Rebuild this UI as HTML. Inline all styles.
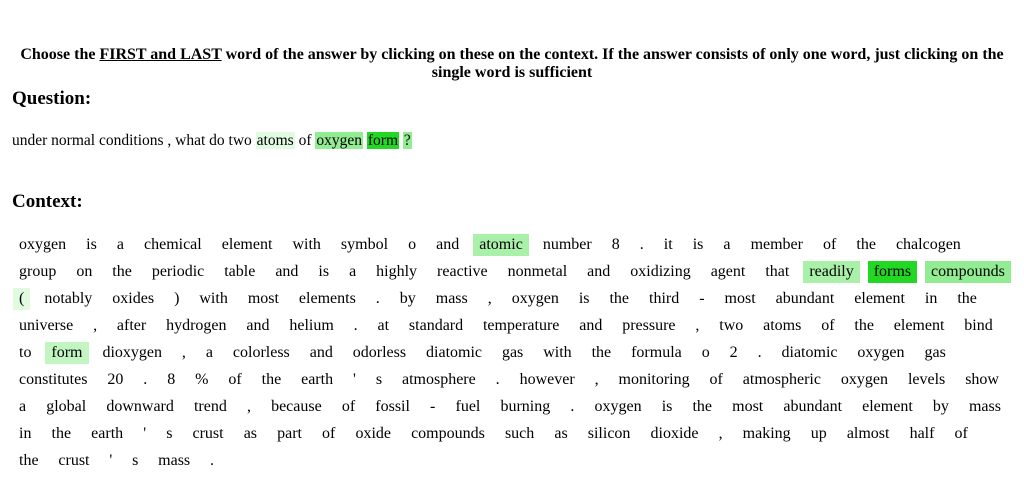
<!DOCTYPE html>
<html><head><style>
body{margin:0;width:1024px;height:487px;background:#fff;font-family:"Liberation Serif",serif;color:#000;overflow:hidden}
.hdr{position:absolute;top:46px;left:4px;width:1016px;text-align:center;font-weight:bold;font-size:16px;line-height:18px}
h2{position:absolute;margin:0;font-size:19px;font-weight:bold;left:12px}
.q{position:absolute;top:131px;left:12px;font-size:15.5px;line-height:19px}
.q span{padding:0 1px}
.ctx{position:absolute;top:234px;left:13px;font-size:16px}
.ln{display:flex;justify-content:space-between;height:27px}
.ln span{padding:0 6px;height:22px;line-height:22px;white-space:nowrap}
.l1{background:#e0fbe0}.l2{background:#c2f5c2}.l3{background:#a9f0a9}.l4{background:#92ec92}.l5{background:#22d822}
</style></head><body>
<div class="hdr">Choose the <u>FIRST and LAST</u> word of the answer by clicking on these on the context. If the answer consists of only one word, just clicking on the<br>single word is sufficient</div>
<h2 style="top:88px">Question:</h2>
<div class="q">under normal conditions , what do two <span class="l1">atoms</span> of <span class="l4">oxygen</span> <span class="l5">form</span> <span class="l4">?</span></div>
<h2 style="top:191px">Context:</h2>
<div class="ctx">
<div class="ln" style="width:954px"><span>oxygen</span><span>is</span><span>a</span><span>chemical</span><span>element</span><span>with</span><span>symbol</span><span>o</span><span>and</span><span class="l3">atomic</span><span>number</span><span>8</span><span>.</span><span>it</span><span>is</span><span>a</span><span>member</span><span>of</span><span>the</span><span>chalcogen</span></div>
<div class="ln" style="width:998px"><span>group</span><span>on</span><span>the</span><span>periodic</span><span>table</span><span>and</span><span>is</span><span>a</span><span>highly</span><span>reactive</span><span>nonmetal</span><span>and</span><span>oxidizing</span><span>agent</span><span>that</span><span class="l3">readily</span><span class="l5">forms</span><span class="l4">compounds</span></div>
<div class="ln" style="width:970px"><span class="l1">(</span><span>notably</span><span>oxides</span><span>)</span><span>with</span><span>most</span><span>elements</span><span>.</span><span>by</span><span>mass</span><span>,</span><span>oxygen</span><span>is</span><span>the</span><span>third</span><span>-</span><span>most</span><span>abundant</span><span>element</span><span>in</span><span>the</span></div>
<div class="ln" style="width:986px"><span>universe</span><span>,</span><span>after</span><span>hydrogen</span><span>and</span><span>helium</span><span>.</span><span>at</span><span>standard</span><span>temperature</span><span>and</span><span>pressure</span><span>,</span><span>two</span><span>atoms</span><span>of</span><span>the</span><span>element</span><span>bind</span></div>
<div class="ln" style="width:939px"><span>to</span><span class="l2">form</span><span>dioxygen</span><span>,</span><span>a</span><span>colorless</span><span>and</span><span>odorless</span><span>diatomic</span><span>gas</span><span>with</span><span>the</span><span>formula</span><span>o</span><span>2</span><span>.</span><span>diatomic</span><span>oxygen</span><span>gas</span></div>
<div class="ln" style="width:992px"><span>constitutes</span><span>20</span><span>.</span><span>8</span><span>%</span><span>of</span><span>the</span><span>earth</span><span>'</span><span>s</span><span>atmosphere</span><span>.</span><span>however</span><span>,</span><span>monitoring</span><span>of</span><span>atmospheric</span><span>oxygen</span><span>levels</span><span>show</span></div>
<div class="ln" style="width:994px"><span>a</span><span>global</span><span>downward</span><span>trend</span><span>,</span><span>because</span><span>of</span><span>fossil</span><span>-</span><span>fuel</span><span>burning</span><span>.</span><span>oxygen</span><span>is</span><span>the</span><span>most</span><span>abundant</span><span>element</span><span>by</span><span>mass</span></div>
<div class="ln" style="width:961px"><span>in</span><span>the</span><span>earth</span><span>'</span><span>s</span><span>crust</span><span>as</span><span>part</span><span>of</span><span>oxide</span><span>compounds</span><span>such</span><span>as</span><span>silicon</span><span>dioxide</span><span>,</span><span>making</span><span>up</span><span>almost</span><span>half</span><span>of</span></div>
<div class="ln" style="width:207px"><span>the</span><span>crust</span><span>'</span><span>s</span><span>mass</span><span>.</span></div>
</div>
</body></html>
